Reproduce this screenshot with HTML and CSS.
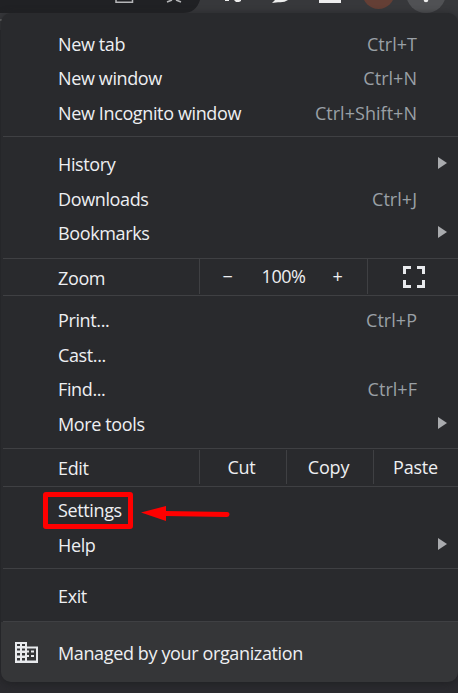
FILE: index.html
```html
<!DOCTYPE html>
<html lang="en">
<head>
<meta charset="utf-8">
<title>Browser menu</title>
<link rel="stylesheet" href="styles.css">
</head>
<body>
<svg class="toolbar" width="458" height="30" viewBox="0 0 458 30" aria-hidden="true">
  <rect width="458" height="30" fill="#37383b"/>
  <path d="M0 0H200Q196 13 183 13H0z" fill="#202124"/>
  <path d="M116 0V2.200H132.500V0" fill="none" stroke="#b5b6b8" stroke-width="1.500"/>
  <path d="M167 2L172 0M176 0L181 2" fill="none" stroke="#b5b6b8" stroke-width="1.600"/>
  <path d="M225 0H229V1H225zM234 0H241V1L239 2H236z" fill="#eee"/>
  <path d="M272 3L275 0H288Q284 3 278 2.200z" fill="#eee"/>
  <rect x="319" y="0" width="22" height="3" fill="#eee"/>
  <circle cx="378.500" cy="-7" r="16" fill="#643f35"/>
  <circle cx="426" cy="-7" r="20" fill="#505154"/>
  <circle cx="426" cy="0" r="2.300" fill="#eee"/>
  <path d="M0 20H2" stroke="#777" stroke-width="1.500"/>
</svg>
<main class="menu">
  <section class="group first">
    <div class="item"><span>New tab</span><kbd>Ctrl+T</kbd></div>
    <div class="item"><span>New window</span><kbd>Ctrl+N</kbd></div>
    <div class="item"><span>New Incognito window</span><kbd>Ctrl+Shift+N</kbd></div>
  </section>
  <section class="group history">
    <div class="item"><span>History</span><i class="arrow"></i></div>
    <div class="item"><span>Downloads</span><kbd>Ctrl+J</kbd></div>
    <div class="item"><span>Bookmarks</span><i class="arrow"></i></div>
  </section>
  <section class="bar zoom">
    <span class="name">Zoom</span>
    <div class="level"><span class="sign">−</span><span class="percent">100%</span><span class="sign plus">+</span></div>
    <div class="full">
      <svg width="22" height="22" viewBox="0 0 22 22"><path d="M1.500 8V1.500H8M14 1.500H20.500V8M20.500 14V20.500H14M8 20.500H1.500V14" fill="none" stroke="#e8eaed" stroke-width="3"/></svg>
    </div>
  </section>
  <section class="group tools">
    <div class="item"><span>Print...</span><kbd>Ctrl+P</kbd></div>
    <div class="item"><span>Cast...</span></div>
    <div class="item"><span>Find...</span><kbd>Ctrl+F</kbd></div>
    <div class="item"><span>More tools</span><i class="arrow"></i></div>
  </section>
  <section class="bar edit">
    <span class="name">Edit</span>
    <span class="action">Cut</span><span class="action">Copy</span><span class="action">Paste</span>
  </section>
  <section class="group settings">
    <div class="item"><span>Settings</span></div>
    <div class="item"><span>Help</span><i class="arrow"></i></div>
  </section>
  <section class="group exit">
    <div class="item"><span>Exit</span></div>
  </section>
  <footer class="managed">
    <svg width="24" height="22" viewBox="0 0 24 22"><path fill="#e8eaed" fill-rule="evenodd" d="M0 0H12V4.500H23V21H0zM2 2V4H5V2zM7 2V4H10V2zM2 6.500V8.500H5V6.500zM7 6.500V8.500H10V6.500zM2 11V13.500H5V11zM7 11V13.500H10V11zM2 16V18.500H5V16zM7 16V18.500H10V16zM12 6.500V8.500H14V10.500H12V13H14V15H12V18.500H21V6.500z"/><path d="M16 8.500H19V10.500H16zM16 13H19V15H16z" fill="#e8eaed"/></svg>
    <span>Managed by your organization</span>
  </footer>
</main>
<div class="highlight"></div>
<svg class="pointer" width="92" height="18" viewBox="0 0 92 18" aria-hidden="true"><path d="M24 8.500L86 9.500" stroke="#f00" stroke-width="5" stroke-linecap="round"/><path d="M0 7.500L25 1V16z" fill="#f00"/></svg>
</body>
</html>
```
FILE: styles.css
```css
* { box-sizing: border-box; }
body {
  margin: 0;
  height: 693px;
  padding: 13px 0 0 1px;
  overflow: hidden;
  background: #2b2b2f;
  color: #eeeff2;
  font: 18px/34.5px "Open Sans", "Noto Sans", sans-serif;
  letter-spacing: -0.37px;
}
.toolbar { position: absolute; top: 0; left: 0; }
.menu {
  position: relative;
  height: 669px;
  display: flex;
  flex-direction: column;
  overflow: hidden;
  border-radius: 10px;
  background: #292a2d;
  box-shadow: 0 2px 8px #202124;
}
.group, .bar { border-bottom: 1px solid #3f4043; margin-left: 2px; flex: none; }
.group { padding-left: 55px; }
.first { height: 124px; padding-top: 13.5px; }
.history { height: 122px; padding-top: 10px; }
.tools { height: 153px; padding-top: 7px; }
.settings { height: 82px; padding-top: 6px; }
.exit { height: 53px; padding-top: 10px; }
.item { display: flex; justify-content: space-between; height: 34.5px; padding-right: 41px; }
.item span, .item kbd, .managed span { white-space: nowrap; }
kbd { font: inherit; letter-spacing: 0.03px; color: #9aa0a6; }
.arrow {
  align-self: flex-start;
  margin: 10px -30px 0 0;
  border-left: 9px solid #a9abae;
  border-top: 6px solid transparent;
  border-bottom: 6px solid transparent;
}
.bar { display: flex; }
.name { width: 196px; padding-left: 55px; }
.zoom { height: 37px; }
.zoom .name { padding-top: 2px; }
.level { width: 169px; height: 35px; display: flex; border: solid #3f4043; border-width: 0 1px; }
.sign { width: 55px; text-align: center; }
.plus { width: 51px; }
.percent { width: 57px; text-align: center; letter-spacing: -0.5px; }
.full { flex: 1; padding: 7px 0 0 35px; line-height: 0; }
.edit { height: 38px; }
.edit .name { padding-top: 2px; }
.edit .name { width: 196px; flex: none; }
.action { width: 87px; flex: none; height: 34px; margin-top: 1px; border-left: 1px solid #3f4043; padding-right: 3px; text-align: center; line-height: 34px; letter-spacing: -0.2px; }
.managed { flex: 1; display: flex; align-items: center; padding-left: 14px; background: #353638; }
.managed svg { margin-top: 2px; }
.managed span { margin-left: 19px; padding-top: 3px; }
.highlight { position: absolute; left: 43px; top: 492px; width: 90px; height: 37px; border: 5px solid #f00; border-radius: 3px; }
.pointer { position: absolute; left: 141px; top: 505px; }
```
